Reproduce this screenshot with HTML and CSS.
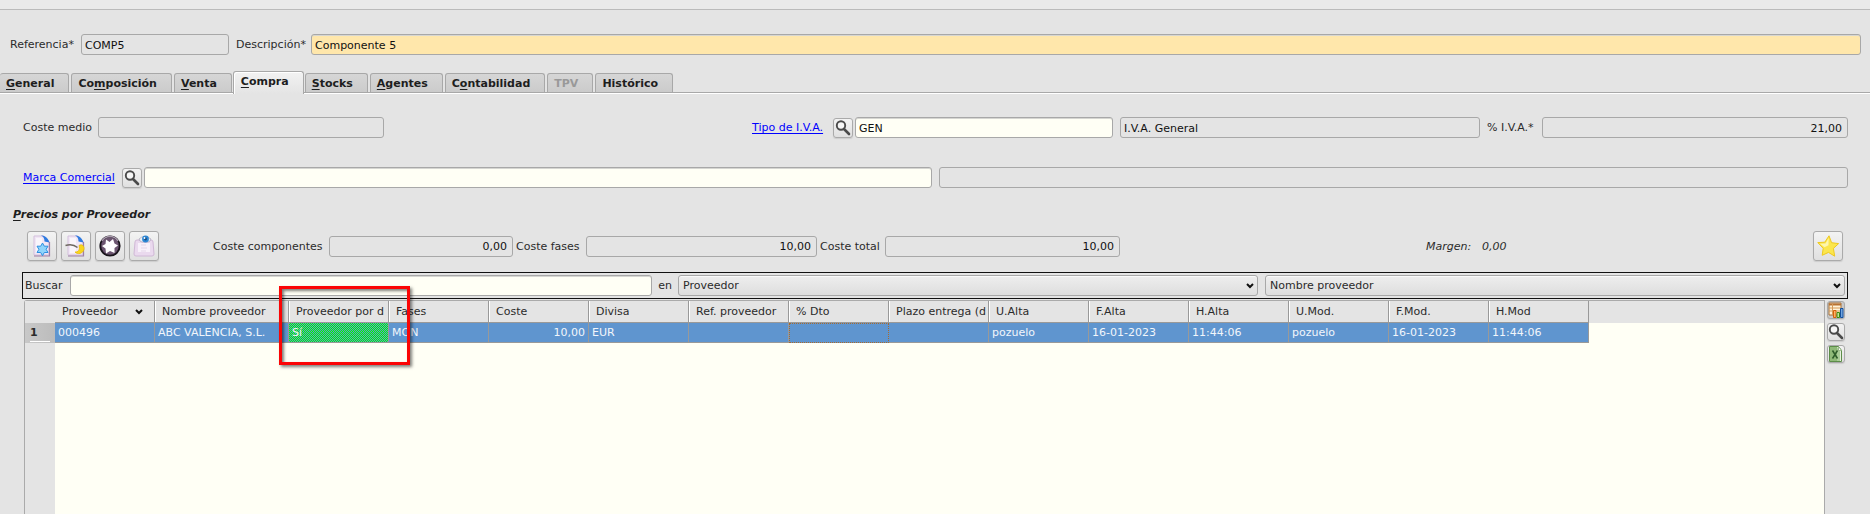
FILE: index.html
```html
<!DOCTYPE html>
<html lang="es">
<head>
<meta charset="utf-8">
<title>Artículo COMP5</title>
<link rel="stylesheet" href="styles.css">
</head>
<body>
<svg class="defs" aria-hidden="true">
  <symbol id="lens" viewBox="0 0 16 16">
    <circle cx="6" cy="5.5" r="4.2" fill="#f6f6f6" stroke="#4a4a4a" stroke-width="1.9"/>
    <path d="M9 9l5 5" stroke="#4a4a4a" stroke-width="2.6" stroke-linecap="round"/>
  </symbol>
  <symbol id="sheet" viewBox="0 0 22 22">
    <path d="M3 1h10l5 5v14H3z" fill="#f1e6f5" stroke="#d3bfdc" stroke-width="1"/>
    <path d="M5 3h6v15H5z" fill="#fff" opacity=".6"/>
    <path d="M18.500 7v14H3" fill="none" stroke="#9d7fa5" stroke-width="1.200"/>
    <path d="M10 0.500c4 0 7 2.500 8.500 7l-5-1c0-3-1-5-3.500-6z" fill="#2f7be0"/>
  </symbol>
  <symbol id="chevron" viewBox="0 0 8 6">
    <path d="M1 1l3 3 3-3" fill="none" stroke="#111" stroke-width="2"/>
  </symbol>
</svg>
<div class="topbar"></div>
<main class="form">
  <div class="row row-ref">
    <label for="ref">Referencia*</label>
    <input id="ref" class="field locked" value="COMP5" readonly>
    <label for="desc" class="second">Descripción*</label>
    <input id="desc" class="field required" value="Componente 5">
  </div>

  <div class="tabs" role="tablist">
    <button class="tab" role="tab"><u>G</u>eneral</button>
    <button class="tab" role="tab">Co<u>m</u>posición</button>
    <button class="tab" role="tab"><u>V</u>enta</button>
    <button class="tab active" role="tab" aria-selected="true"><u>C</u>ompra</button>
    <button class="tab" role="tab"><u>S</u>tocks</button>
    <button class="tab" role="tab"><u>A</u>gentes</button>
    <button class="tab" role="tab">C<u>o</u>ntabilidad</button>
    <button class="tab" role="tab" disabled>TPV</button>
    <button class="tab" role="tab">Histórico</button>
  </div>

  <section class="pane" role="tabpanel">
    <div class="row row-iva">
      <label for="medio">Coste medio</label>
      <input id="medio" class="field locked" readonly>
      <span></span>
      <a href="#iva">Tipo de I.V.A.</a>
      <button class="lens-button" aria-label="Buscar I.V.A."><svg><use href="#lens"/></svg></button>
      <span></span>
      <input id="iva" class="field" value="GEN" aria-label="Tipo de I.V.A.">
      <span></span>
      <input class="field locked" value="I.V.A. General" aria-label="Descripción I.V.A." readonly>
      <label for="pct" class="second">% I.V.A.*</label>
      <input id="pct" class="field locked number" value="21,00" readonly>
    </div>
    <div class="row row-brand">
      <a href="#marca">Marca Comercial</a>
      <button class="lens-button" aria-label="Buscar marca"><svg><use href="#lens"/></svg></button>
      <span></span>
      <input id="marca" class="field" aria-label="Marca Comercial">
      <span></span>
      <input class="field locked" aria-label="Nombre de la marca" readonly>
    </div>

    <h2 class="heading"><u>P</u>recios por Proveedor</h2>

    <div class="row row-costs">
      <div class="tools">
        <button class="tool" aria-label="Nuevo">
          <svg viewBox="0 0 22 22"><use href="#sheet"/><path d="M11.500 8l1.800 3.200h3.700l-1.900 3.100 1.900 3.200h-3.700l-1.800 3.200-1.800-3.200H6l1.900-3.200L6 11.200h3.700z" fill="#8fd4fb" stroke="#2b8fe0" stroke-width="1"/></svg>
        </button>
        <button class="tool" aria-label="Modificar">
          <svg viewBox="0 0 22 22"><use href="#sheet"/><path d="M0.500 10.500c5-1.500 9-.5 12 2" fill="none" stroke="#6f6862" stroke-width="1.600"/><path d="M14 10.500c3-2 6 1 4.800 4.500s-6 5-8.800 2c3 .5 5.500-2.500 4-6.500z" fill="#f8d61c" stroke="#e8b908" stroke-width=".8"/></svg>
        </button>
        <button class="tool" aria-label="Borrar">
          <svg viewBox="0 0 22 22"><circle cx="11" cy="11" r="9.700" fill="#6c5570" stroke="#19141b" stroke-width="1.800"/><path d="M3 6a9.500 9.500 0 0 1 16 0" fill="none" stroke="#a99bad" stroke-width="1.500"/><path d="M7 4.500l3.500 2.500 3.500-3 1.500 4.500 3.500 2-3.500 2.500 0 5-4.500-2-4 2.500-.5-5L3 11l3.500-2z" fill="#fff"/></svg>
        </button>
        <button class="tool" aria-label="Ver">
          <svg viewBox="0 0 22 22"><path d="M2 7q0-2 2-2h14q2 0 2 2l1 12q0 2-2 2H3q-2 0-2-2z" fill="#ead9ee" stroke="#d0b8d6"/><path d="M5 8h12v9H5z" fill="#f8f0fa"/><path d="M8 10h5M8 13h6M8 16h5" stroke="#e4d6e8"/><path d="M6 4q5-5 12 0-1 3-3 3H9q-2 0-3-3z" fill="#e9f2fb" stroke="#a9a2b5" stroke-width=".7"/><circle cx="12.500" cy="4" r="3.400" fill="#2c86d3"/><circle cx="12.500" cy="4" r="1.400" fill="#164a80"/><circle cx="11.500" cy="3" r=".9" fill="#fff"/></svg>
        </button>
      </div>
      <label for="ccomp">Coste componentes</label>
      <input id="ccomp" class="field locked number" value="0,00" readonly>
      <label for="cfases" class="second">Coste fases</label>
      <input id="cfases" class="field locked number" value="10,00" readonly>
      <label for="ctotal" class="second">Coste total</label>
      <input id="ctotal" class="field locked number" value="10,00" readonly>
      <span></span>
      <em>Margen:</em>
      <em>0,00</em>
      <button class="tool" aria-label="Favorito">
        <svg viewBox="0 0 22 22"><path d="M12 .8l2.600 6.900 7 .9-5.200 4.800 1.300 7.800-6.200-3.800-6.300 2.900 1-7L.8 7.600l7-.4z" fill="#fbe64d" stroke="#eec91f" stroke-width="1" stroke-linejoin="round"/><path d="M11.600 3l-3 5.500-5.500.2 4.400 3.500 4-2z" fill="#fdf6b0"/></svg>
      </button>
    </div>

    <div class="search">
      <label for="buscar">Buscar</label>
      <input id="buscar" class="field">
      <label for="campo1" class="center">en</label>
      <div class="combo"><select id="campo1"><option>Proveedor</option></select><svg><use href="#chevron"/></svg></div>
      <span></span>
      <div class="combo"><select aria-label="Segundo campo"><option>Nombre proveedor</option></select><svg><use href="#chevron"/></svg></div>
    </div>

    <div class="grid-area">
      <div class="grid-frame">
        <table class="grid">
          <colgroup><col class="c-num"><col><col class="c-name"><col><col><col><col><col><col><col><col><col><col><col><col><col><col class="c-rest"></colgroup>
          <thead>
            <tr>
              <th></th>
              <th class="sorted">Proveedor<svg><use href="#chevron"/></svg></th><th>Nombre proveedor</th><th>Proveedor por d</th><th>Fases</th><th>Coste</th><th>Divisa</th><th>Ref. proveedor</th><th>% Dto</th><th>Plazo entrega (d</th><th>U.Alta</th><th>F.Alta</th><th>H.Alta</th><th>U.Mod.</th><th>F.Mod.</th><th>H.Mod</th><th class="rest"></th>
            </tr>
          </thead>
          <tbody>
            <tr>
              <th class="num"><span>1</span></th>
              <td>000496</td><td>ABC VALENCIA, S.L.</td><td class="yes">Sí</td><td>MON</td><td class="right">10,00</td><td>EUR</td><td></td><td class="focus"></td><td></td><td>pozuelo</td><td>16-01-2023</td><td>11:44:06</td><td>pozuelo</td><td>16-01-2023</td><td>11:44:06</td><td class="rest"></td>
            </tr>
          </tbody>
        </table>
        <div class="marker"></div>
      </div>
      <div class="side">
        <button class="side-button pressed" aria-label="Configurar tabla">
          <svg viewBox="0 0 16 16"><path d="M1 1h12v12H1z" fill="#fff3d8" stroke="#a5703a"/><path d="M1 2.500h12" stroke="#b87333" stroke-width="2"/><path d="M1 6h12M1 9h12M4.500 2v11" stroke="#d79a57"/><path d="M5.500 8.500h2.500v7H5.500z" fill="#ffb066" stroke="#d2600a"/><path d="M9 10.500h2.500v5H9z" fill="#bfe59a" stroke="#3f8a10"/><path d="M12.500 6.500H15v9h-2.500z" fill="#6fa4e0" stroke="#134f9c"/></svg>
        </button>
        <button class="side-button" aria-label="Buscar"><svg><use href="#lens"/></svg></button>
        <button class="side-button" aria-label="Exportar a Excel">
          <svg viewBox="0 0 16 16"><path d="M1.500.5h9l3 4v11h-12z" fill="#e6f0de" stroke="#5c8d49"/><path d="M2 1h7v14H2z" fill="#8fba78"/><path d="M9 1v14h3V5z" fill="#a9cc97"/><path d="M10.500.5v4h3z" fill="#fff" stroke="#7ba569" stroke-width=".7"/><path d="M4.500 4.500l5 8M9.500 4.500l-5 8" stroke="#2e5d2a" stroke-width="1.500"/></svg>
        </button>
      </div>
    </div>
  </section>
</main>
</body>
</html>
```
FILE: styles.css
```css
* { box-sizing: border-box; }

body {
  margin: 0;
  background: #e4e4e4;
  color: #2b2b2b;
  font: 11px/13px "DejaVu Sans", sans-serif;
}

button, input, select { font: inherit; color: #111; margin: 0; }
u { text-underline-offset: 2px; }
a { color: #00f; text-underline-offset: 2px; }
.defs { position: absolute; width: 0; height: 0; }

.topbar { height: 10px; background: #eaeaea; border-bottom: 1px solid #bbb; }

.form, .pane { display: flex; flex-direction: column; }
.form { min-height: calc(100vh - 10px); }
.pane { flex: 1; border-top: 1px solid #fff; }

.row { display: grid; align-items: center; }

.row-ref {
  grid-template-columns: 71px 148px 82px 1fr;
  padding: 24px 9px 0 10px;
}
.row-iva {
  grid-template-columns: 75px 286fr 368fr 81px 20px 2px 258fr 7px 360fr 62px 306fr;
  padding: 23px 22px 0 23px;
}
.row-brand {
  grid-template-columns: 99px 20px 2px 788fr 7px 909fr;
  padding: 29px 22px 0 23px;
}
.row-costs {
  grid-template-columns: 186px 116px 184fr 73px 231fr 68px 235fr 306fr 56px 331fr 30px;
  padding: 9px 27px 0 27px;
}
.row-costs .second { padding-left: 3px; }
.row-ref .second, .row-iva .second { padding-left: 7px; }

.field {
  width: 100%;
  min-width: 0;
  height: 21px;
  padding: 1px 3px 0;
  background: #fffff5;
  border: 1px solid #a8a8a8;
  border-radius: 3px;
  box-shadow: inset 0 1px 0 #d6d6d2;
}
.field.locked { background: #e4e4e4; box-shadow: none; }
.field.required { background: #ffe7ab; }
.field.number { text-align: right; padding-right: 5px; }

.tabs {
  display: flex;
  align-items: flex-end;
  gap: 2px;
  margin-top: 16px;
  border-bottom: 1px solid #a8a8a8;
}
.tab {
  height: 19px;
  padding: 0 14px 0 6px;
  font-weight: bold;
  color: #1e1e1e;
  background: linear-gradient(#d6d6d6, #cbcbcb);
  border: 1px solid #a8a8a8;
  border-bottom: 0;
  border-radius: 3px 3px 0 0;
}
.tab:first-child { border-left: 0; }
.tab:disabled { color: #999; }
.tab.active {
  position: relative;
  height: 23px;
  margin: 0 -1px -2px;
  padding-left: 7px;
  padding-bottom: 4px;
  background: linear-gradient(#f2f2f2, #e4e4e4);
  box-shadow: inset 1px 1px 0 #fff;
}

.lens-button, .tool, .side-button {
  display: flex;
  align-items: center;
  justify-content: center;
  padding: 0;
  background: linear-gradient(#f3f3f3, #e0e0e0);
  border: 1px solid #aaa;
  border-radius: 3px;
  box-shadow: 0 1px 1px #ccc;
}
.lens-button { width: 20px; height: 20px; }
.lens-button svg, .side-button svg { width: 16px; height: 16px; }
.tool { width: 30px; height: 30px; }
.tool svg { width: 22px; height: 22px; }
.tools { display: flex; gap: 4px; }

.heading {
  margin: 20px 0 0 13px;
  font: italic bold 11px/14px "DejaVu Sans", sans-serif;
  color: #1e1e1e;
}

.search {
  display: grid;
  grid-template-columns: 45px 582fr 26px 580fr 7px 580fr;
  align-items: center;
  margin: 11px 22px 0 22px;
  padding: 2px;
  border: 1px solid #111;
}
.center { text-align: center; }

.combo { position: relative; }
.combo select {
  display: block;
  width: 100%;
  height: 21px;
  padding: 0 4px;
  appearance: none;
  color: #2b2b2b;
  background: linear-gradient(#eee, #dedede);
  border: 1px solid #a8a8a8;
  border-radius: 3px;
  box-shadow: inset 0 1px 0 #fafafa;
}
.combo svg { position: absolute; right: 4px; top: 8px; width: 8px; height: 6px; }

.grid-area { flex: 1; display: flex; gap: 2px; margin: 1px 25px 0 24px; }
.grid-frame {
  position: relative;
  flex: 1;
  min-width: 0;
  background: linear-gradient(90deg, #e4e4e4 30px, #fffff5 30px);
  border: 1px solid #aaa;
  border-bottom: 0;
  border-top-left-radius: 3px;
}
.grid { width: 100%; table-layout: fixed; border-collapse: separate; border-spacing: 0; }
.grid col { width: 100px; }
.grid .c-num { width: 30px; }
.grid .c-name { width: 134px; }
.grid .c-rest { width: auto; }
.grid th, .grid td { padding: 0; overflow: hidden; white-space: nowrap; text-align: left; }
.grid thead th {
  height: 22px;
  padding-left: 7px;
  font-weight: normal;
  background: #e4e4e4;
  border-right: 1px solid #999;
  border-bottom: 1px solid #999;
  box-shadow: inset 1px 0 0 #fff;
}
.grid thead th:first-child, .grid thead .rest { border-color: #e4e4e4; box-shadow: none; }
.grid thead .sorted { box-shadow: none; }
.sorted svg { width: 8px; height: 6px; margin-left: 17px; }
.grid td {
  height: 20px;
  padding: 0 3px;
  color: #f2f6fb;
  background: #5f95cf;
  border-right: 1px solid #999;
  border-bottom: 1px solid #999;
}
.grid tbody .rest { background: none; border: 0; }
.grid .right { text-align: right; }
.grid .yes { background: repeating-conic-gradient(#00ff00 0 25%, #5f95cf 0 50%) 0 0 / 2px 2px; }
.grid .focus { border: 1px dotted #a86a2c; }
.grid .num { padding: 0 5px; background: linear-gradient(90deg, #c8c8c8, #bcbcbc); }
.num span { display: block; height: 18px; line-height: 17px; border-bottom: 1px solid #fff; }

.marker {
  position: absolute;
  left: 254px;
  top: -15px;
  width: 131px;
  height: 79px;
  border: 3px solid #fb0505;
  box-shadow: 2px 2px 3px rgba(0, 0, 0, .5), inset 2px 2px 3px rgba(0, 0, 0, .5);
}

.side { display: flex; flex-direction: column; gap: 4px; padding-top: 1px; }
.side-button { width: 18px; height: 18px; }
.side-button.pressed { background: #c9c9c9; }
```
